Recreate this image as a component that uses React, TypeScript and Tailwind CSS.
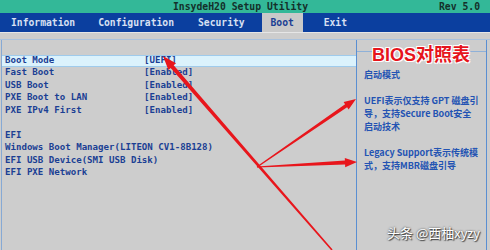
import React from "react";

const mono = { fontFamily: '"DejaVu Sans Mono", "Liberation Mono", monospace' };
const cjk = { fontFamily: '"Noto Sans CJK SC", "Noto Sans", sans-serif' };

const rows: [string, string][] = [
  ["Boot Mode", "[UEFI]"],
  ["Fast Boot", "[Enabled]"],
  ["USB Boot", "[Enabled]"],
  ["PXE Boot to LAN", "[Enabled]"],
  ["PXE IPv4 First", "[Enabled]"],
];

const efi = ["EFI", "Windows Boot Manager(LITEON CV1-8B128)", "EFI USB Device(SMI USB Disk)", "EFI PXE Network"];

export default function App() {
  return (
    <div className="relative w-[490px] h-[250px] overflow-hidden bg-[#cdcdcd]">
      {/* title bar */}
      <div className="h-[13px] bg-[#33b898] flex items-center font-bold text-[9.75px] text-[#14302a] leading-none" style={mono}>
        <span className="ml-[173px]">InsydeH20 Setup Utility</span>
        <span className="ml-auto mr-[10px]">Rev 5.0</span>
      </div>
      {/* menu bar */}
      <div className="h-[19px] bg-[#0b3f9f] flex items-stretch font-bold text-[9.7px] text-[#d8e0f2] leading-none" style={mono}>
        <span className="ml-[11px] flex items-center">Information</span>
        <span className="ml-[23px] flex items-center">Configuration</span>
        <span className="ml-[24px] flex items-center">Security</span>
        <span className="ml-[17px] w-[41px] bg-[#c9c9c9] text-[#1b3f94] flex items-center justify-center">Boot</span>
        <span className="ml-[21px] flex items-center">Exit</span>
      </div>
      {/* body */}
      <div className="border-t border-[#e6e6e6] h-[218px] flex flex-col">
        <div className="h-[6px]" />
        <div className="flex-1 flex border-t border-[#a9c2de]">
          {/* left panel */}
          <div className="w-[355px] ml-[1px] border-l border-[#86a9d4] pt-[14.5px] font-bold text-[9.1px] text-[#1b3f94]" style={mono}>
            {rows.map(([k, v], i) => (
              <div
                key={k}
                className={
                  "h-[12.5px] flex items-center whitespace-pre " +
                  (i === 0 ? "bg-[#dbf2fc] border-y border-[#9fcbec]" : "")
                }
              >
                <span className="ml-[3px] w-[139px]">{k}</span>
                <span>{v}</span>
              </div>
            ))}
            <div className="h-[12.5px]" />
            {efi.map((t) => (
              <div key={t} className="h-[12.5px] flex items-center whitespace-pre">
                <span className="ml-[3px]">{t}</span>
              </div>
            ))}
          </div>
          {/* right panel */}
          <div className="w-[131px] border-l border-r border-[#5a8fd2] flex flex-col">
            <div className="h-[12px] border-b border-[#8fb1d8]" />
            <div className="pt-[15.5px] pl-[7px] font-bold text-[9px] leading-[13px] text-[#2353b3] whitespace-nowrap" style={cjk}>
              <div>启动模式</div>
              <div>&nbsp;</div>
              <div>UEFI表示仅支持 GPT 磁盘引</div>
              <div>导，支持Secure Boot安全</div>
              <div>启动技术</div>
              <div>&nbsp;</div>
              <div>Legacy Support表示传统模</div>
              <div>式，支持MBR磁盘引导</div>
            </div>
          </div>
        </div>
      </div>

      {/* annotation title */}
      <div
        className="absolute left-[372px] top-[42px] text-[18px] leading-[22px] font-bold text-[#e6141c] whitespace-nowrap [text-shadow:0_0_1px_#fff,1px_1px_0_#fff,-1px_-1px_0_#fff,1px_-1px_0_#fff,-1px_1px_0_#fff]"
        style={{ fontFamily: '"Liberation Sans", "Noto Sans CJK SC", sans-serif' }}
      >
        BIOS<span style={cjk}>对照表</span>
      </div>

      {/* arrows */}
      <svg className="absolute inset-0 pointer-events-none" width="490" height="250" viewBox="0 0 490 250">
        <polygon
          fill="#e8161c"
          points="163,56 176,63.3 173.7,65.3 332.6,249.5 331.4,250.5 170.7,67.9 168.4,69.9"
        />
        <polygon
          fill="#e8161c"
          points="356,99 343.6,102.1 345.1,104.3 256.7,166.6 257.3,167.4 347.1,107.3 348.6,109.5"
        />
        <polygon
          fill="#e8161c"
          points="357,162 344.8,157.9 344.9,160.6 257,166.5 257,167.5 345.1,164.6 345.2,167.3"
        />
      </svg>

      {/* watermark */}
      <div
        className="absolute left-[387px] top-[224px] text-[13px] leading-[18px] text-white whitespace-nowrap [text-shadow:0_0_2px_#333,1px_1px_1px_#444]"
        style={cjk}
      >
        头条 @西柚xyzy
      </div>
    </div>
  );
}
